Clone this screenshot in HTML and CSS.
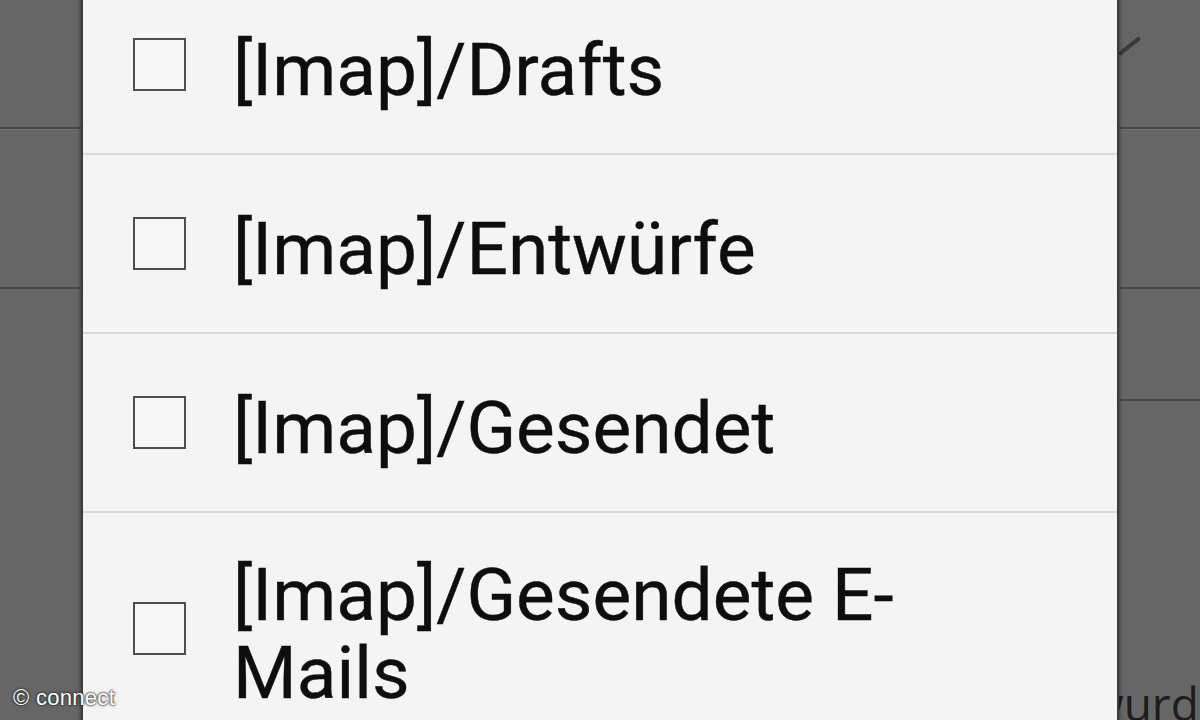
FILE: index.html
```html
<!DOCTYPE html>
<html lang="de">
<head>
<meta charset="utf-8">
<title>Ordner</title>
<link rel="stylesheet" href="styles.css">
</head>
<body>
<div class="screen">
  <div class="backdrop">
    <div class="bg-header"><span class="bg-check"></span></div>
    <div class="bg-row"></div>
    <div class="bg-split">
      <div class="bg-cell"></div>
      <div class="bg-cell bg-cell-lined"></div>
    </div>
    <div class="bg-fill"></div>
    <div class="bg-bottom"><span class="bg-text">wurde</span></div>
  </div>

  <div class="dialog">
    <div class="item">
      <span class="box"></span>
      <span class="label">[Imap]/Drafts</span>
    </div>
    <div class="item">
      <span class="box"></span>
      <span class="label">[Imap]/Entwürfe</span>
    </div>
    <div class="item">
      <span class="box"></span>
      <span class="label">[Imap]/Gesendet</span>
    </div>
    <div class="item item-tall">
      <span class="box"></span>
      <span class="label">[Imap]/Gesendete E-<br>Mails</span>
    </div>
  </div>

  <div class="watermark">© connect</div>
</div>
</body>
</html>
```

FILE: styles.css
```css
html, body {
  margin: 0;
  padding: 0;
  background: #666666;
}

.screen {
  position: relative;
  width: 1200px;
  height: 720px;
  overflow: hidden;
  background: #666666;
  font-family: Roboto, "Noto Sans", sans-serif;
}

/* background page behind the overlay */
.backdrop {
  display: flex;
  flex-direction: column;
  height: 720px;
}

.bg-header {
  height: 127px;
  border-bottom: 2px solid #484848;
  box-shadow: 0 1px 0 #707070;
  position: relative;
}

.bg-check {
  position: absolute;
  left: 1116px;
  top: 44px;
  width: 27px;
  height: 4px;
  background: #3a3a3a;
  transform: rotate(-38deg);
  border-radius: 2px;
}

.bg-row {
  height: 158px;
  border-bottom: 2px solid #4a4a4a;
}

.bg-split {
  display: grid;
  grid-template-columns: 600px 1fr;
  height: 112px;
}

.bg-cell-lined {
  border-bottom: 2px solid #4a4a4a;
}

.bg-fill {
  flex: 1;
}

.bg-bottom {
  height: 34px;
  display: flex;
  justify-content: flex-start;
  padding-left: 1088px;
}

.bg-text {
  font-family: "Open Sans", Roboto, sans-serif;
  font-size: 46px;
  line-height: 46px;
  color: #1c1c1c;
  margin-top: -6px;
  white-space: nowrap;
}

/* dialog */
.dialog {
  position: absolute;
  left: 83px;
  top: -24px;
  width: 1034px;
  background: #f4f4f4;
  box-shadow: 0 0 0 2px #3d3d3d, 0 0 4px 3px rgba(0, 0, 0, 0.35);
}

.item {
  display: flex;
  align-items: center;
  height: 177px;
  border-bottom: 2px solid #d9d9d9;
  padding-left: 50px;
}

.item-tall {
  height: 230px;
  border-bottom: none;
}

.box {
  flex: none;
  width: 49px;
  height: 49px;
  border: 2px solid #4e4e4e;
  background: #f6f6f6;
  margin-right: 47px;
}

.label {
  font-size: 73px;
  line-height: 78px;
  color: #0e0e0e;
  margin-top: 11px;
  -webkit-text-stroke: 0.4px #0e0e0e;
}

.watermark {
  position: absolute;
  left: 13px;
  bottom: 10px;
  font-family: "Liberation Sans", Arial, sans-serif;
  font-size: 22px;
  line-height: 24px;
  letter-spacing: 0.3px;
  color: #ffffff;
  text-shadow: 0 0 3px #222, 0 0 2px #222;
}
```
